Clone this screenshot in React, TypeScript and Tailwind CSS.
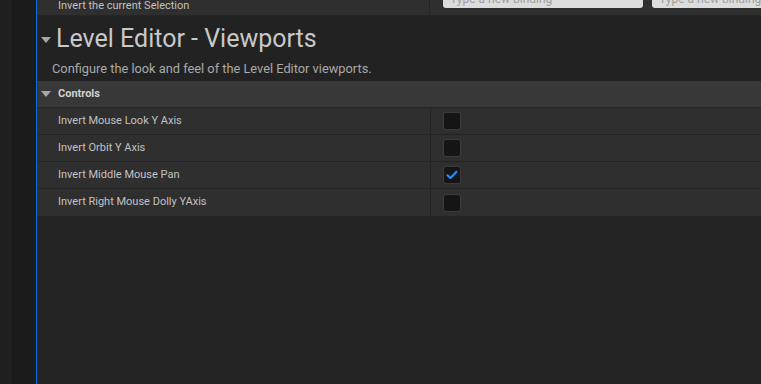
const rows = [
    { label: 'Invert Mouse Look Y Axis', checked: false },
    { label: 'Invert Orbit Y Axis', checked: false },
    { label: 'Invert Middle Mouse Pan', checked: true },
    { label: 'Invert Right Mouse Dolly YAxis', checked: false },
];

function Caret({ className }: { className?: string }) {
    return (
        <svg className={className} width="10" height="6" viewBox="0 0 10 6">
            <path d="M0 0h10L5 6z" fill="#a8a8a8" />
        </svg>
    );
}

function Checkbox({ checked }: { checked: boolean }) {
    return (
        <div className="w-[18px] h-[18px] rounded-[3px] bg-[#151515] border border-[#3c3c3c] flex items-center justify-center">
            {checked && (
                <svg width="12" height="10" viewBox="0 0 12 10">
                    <path d="M1.5 5.2 4.5 8 10.5 1.8" stroke="#1f8fff" strokeWidth="2.2" fill="none" strokeLinecap="round" strokeLinejoin="round" />
                </svg>
            )}
        </div>
    );
}

export default function App() {
    return (
        <div className="w-[761px] h-[384px] flex overflow-hidden bg-[#232323] text-[#c0c0c0]" style={{ fontFamily: 'Roboto, "Noto Sans", sans-serif' }}>
            <div className="w-[12px] shrink-0 bg-[#1f1f1f]" />
            <div className="w-[24px] shrink-0 bg-[#1b1b1b] border-l border-[#171717]" />
            <div className="w-px shrink-0 bg-[#0a6fd8]" />
            <div className="flex-1 flex flex-col min-w-0">
                {/* previous section tail */}
                <div className="h-[16px] flex bg-[#2f2f2f] border-b border-[#252525]">
                    <div className="w-[393px] shrink-0 pl-[21px] text-[11px] leading-[13px] -mt-[1px] text-[#c0c0c0] border-r border-[#242424]">
                        Invert the current Selection
                    </div>
                    <div className="flex gap-[9px] pl-[13px]">
                        <div className="w-[200px] h-[8px] rounded-b-[3px] bg-[#dcdcdc] text-[12px] leading-[13px] text-[#a0a0a0] pl-[7px] overflow-hidden whitespace-nowrap">
                            <div className="-mt-[7px]">Type a new binding</div>
                        </div>
                        <div className="w-[120px] h-[8px] rounded-bl-[3px] bg-[#dcdcdc] text-[12px] leading-[13px] text-[#a0a0a0] pl-[7px] overflow-hidden whitespace-nowrap">
                            <div className="-mt-[7px]">Type a new binding</div>
                        </div>
                    </div>
                </div>

                {/* section header */}
                <div className="h-[65px] bg-[#222222] flex flex-col">
                    <div className="flex items-center h-[45px] pl-[4px] pt-[1px]">
                        <Caret className="mr-[5px] mt-[2px]" />
                        <span className="text-[25px] leading-[28px] text-[#c8c8c8]">Level Editor - Viewports</span>
                    </div>
                    <div className="pl-[15px] text-[12.8px] leading-[15px] text-[#a9a9a9]">
                        Configure the look and feel of the Level Editor viewports.
                    </div>
                </div>

                {/* category */}
                <div className="h-[27px] bg-[#383838] flex items-center pl-[4px] border-b border-[#262626]">
                    <Caret className="mr-[7px]" />
                    <span className="text-[11px] font-bold text-[#d0d0d0]">Controls</span>
                </div>

                {rows.map((row) => (
                    <div key={row.label} className="h-[27px] flex bg-[#2f2f2f] border-b border-[#252525] last:border-b-0">
                        <div className="w-[394px] shrink-0 pl-[21px] flex items-center text-[11px] text-[#c2c2c2] border-r border-[#242424]">
                            {row.label}
                        </div>
                        <div className="flex items-center pl-[12px]">
                            <Checkbox checked={row.checked} />
                        </div>
                    </div>
                ))}
            </div>
        </div>
    );
}
